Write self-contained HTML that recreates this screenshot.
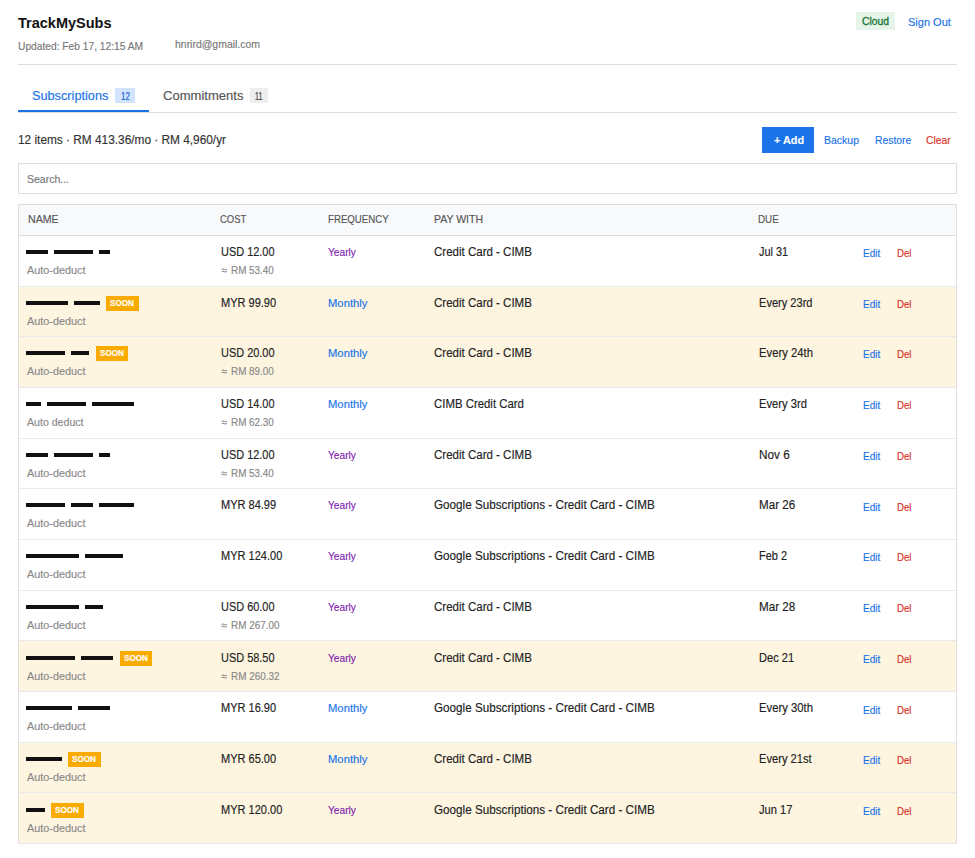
<!DOCTYPE html>
<html><head><meta charset="utf-8"><style>
*{box-sizing:border-box;margin:0;padding:0}
html,body{width:975px;height:858px;overflow:hidden;background:#fff}
body{font-family:"Liberation Sans",sans-serif;position:relative}
.t{position:absolute;white-space:nowrap;line-height:1;transform-origin:0 0;-webkit-text-stroke:0.15px currentColor}
.r{position:absolute}
</style></head><body>
<span class="t" style="left:18.00px;top:15.53px;font-size:14.5px;color:#111;font-weight:bold;-webkit-text-stroke:0;">TrackMySubs</span>
<span class="t" style="left:18.00px;top:40.71px;font-size:10.5px;color:#777;transform:scaleX(0.9734);">Updated: Feb 17, 12:15 AM</span>
<span class="t" style="left:175.00px;top:38.69px;font-size:11px;color:#777;transform:scaleX(0.9508);">hnrird@gmail.com</span>
<div class="r" style="left:856px;top:12px;width:39px;height:18px;background:#e6f4ea;"></div>
<span class="t" style="left:862.00px;top:15.69px;font-size:11px;color:#137333;transform:scaleX(0.9395);-webkit-text-stroke:0.3px #137333;">Cloud</span>
<span class="t" style="left:908.00px;top:16.69px;font-size:11px;color:#1a73e8;">Sign Out</span>
<div class="r" style="left:18px;top:64px;width:939px;height:1px;background:#dddddd;"></div>
<span class="t" style="left:32.00px;top:90.12px;font-size:12.5px;color:#1a73e8;transform:scaleX(1.0169);">Subscriptions</span>
<div class="r" style="left:115px;top:88px;width:20px;height:15px;background:#d2e3fc;"></div>
<span class="t" style="left:120.50px;top:91.73px;font-size:10px;color:#1967d2;transform:scaleX(0.7910);-webkit-text-stroke:0.2px #1967d2;">12</span>
<span class="t" style="left:163.00px;top:90.12px;font-size:12.5px;color:#555;transform:scaleX(1.0429);">Commitments</span>
<div class="r" style="left:250px;top:88px;width:18px;height:15px;background:#eeeeee;"></div>
<span class="t" style="left:255.00px;top:91.73px;font-size:10px;color:#444;transform:scaleX(0.7133);-webkit-text-stroke:0.2px #444;">11</span>
<div class="r" style="left:18px;top:112px;width:939px;height:1px;background:#dddddd;"></div>
<div class="r" style="left:18px;top:110px;width:131px;height:2px;background:#1a73e8;"></div>
<span class="t" style="left:17.70px;top:134.14px;font-size:12px;color:#333;transform:scaleX(0.9870);">12 items · RM 413.36/mo · RM 4,960/yr</span>
<div class="r" style="left:762px;top:127px;width:52px;height:26px;background:#1a73e8;"></div>
<span class="t" style="left:774.00px;top:134.79px;font-size:11px;color:#fff;font-weight:bold;transform:scaleX(0.9855);">+ Add</span>
<span class="t" style="left:824.00px;top:134.79px;font-size:11px;color:#1a73e8;transform:scaleX(0.9541);">Backup</span>
<span class="t" style="left:874.50px;top:134.79px;font-size:11px;color:#1a73e8;transform:scaleX(0.9396);">Restore</span>
<span class="t" style="left:925.80px;top:134.79px;font-size:11px;color:#d93025;transform:scaleX(0.9433);">Clear</span>
<div class="r" style="left:18px;top:163px;width:939px;height:31px;background:#fff;border:1px solid #dddddd"></div>
<span class="t" style="left:27.00px;top:174.27px;font-size:11.5px;color:#757575;transform:scaleX(0.9125);">Search...</span>
<div class="r" style="left:18px;top:204px;width:939px;height:640px;background:#fff;border:1px solid #dddddd"></div>
<div class="r" style="left:19px;top:205px;width:937px;height:30px;background:#f8f9fa;"></div>
<div class="r" style="left:19px;top:235px;width:937px;height:1px;background:#dddddd;"></div>
<span class="t" style="left:27.50px;top:213.69px;font-size:11px;color:#555;transform:scaleX(0.9657);">NAME</span>
<span class="t" style="left:220.40px;top:213.69px;font-size:11px;color:#555;transform:scaleX(0.8575);">COST</span>
<span class="t" style="left:327.80px;top:213.69px;font-size:11px;color:#555;transform:scaleX(0.8790);">FREQUENCY</span>
<span class="t" style="left:434.00px;top:213.69px;font-size:11px;color:#555;transform:scaleX(0.9544);">PAY WITH</span>
<span class="t" style="left:758.30px;top:213.69px;font-size:11px;color:#555;transform:scaleX(0.8908);">DUE</span>
<div class="r" style="left:19px;top:285.67px;width:937px;height:1px;background:#e8eaed;"></div>
<div class="r" style="left:26px;top:250px;width:22px;height:4px;background:#111;"></div>
<div class="r" style="left:54px;top:250px;width:39px;height:4px;background:#111;"></div>
<div class="r" style="left:99px;top:250px;width:11px;height:4px;background:#111;"></div>
<span class="t" style="left:27.20px;top:264.99px;font-size:11px;color:#888;transform:scaleX(0.9845);">Auto-deduct</span>
<span class="t" style="left:220.60px;top:245.64px;font-size:12px;color:#222;transform:scaleX(0.9113);">USD 12.00</span>
<span class="t" style="left:230.80px;top:265.41px;font-size:10.5px;color:#888;transform:scaleX(0.9403);">RM 53.40</span>
<svg class="r" style="left:220.5px;top:268.30px" width="7" height="5" viewBox="0 0 7 5"><path d="M0.6 1.6 Q1.8 0.4 3.2 1.4 T5.9 1.2 M0.6 3.8 Q1.8 2.6 3.2 3.6 T5.9 3.4" fill="none" stroke="#777" stroke-width="0.95"/></svg>
<span class="t" style="left:328.00px;top:246.57px;font-size:11.5px;color:#7e22ad;transform:scaleX(0.8846);">Yearly</span>
<span class="t" style="left:434.20px;top:245.64px;font-size:12px;color:#222;transform:scaleX(0.9595);">Credit Card - CIMB</span>
<span class="t" style="left:758.50px;top:245.64px;font-size:12px;color:#222;transform:scaleX(0.9060);">Jul 31</span>
<span class="t" style="left:862.90px;top:248.29px;font-size:11px;color:#1a73e8;transform:scaleX(0.9130);">Edit</span>
<span class="t" style="left:896.80px;top:248.29px;font-size:11px;color:#d93025;transform:scaleX(0.8788);">Del</span>
<div class="r" style="left:19px;top:286.67px;width:937px;height:49.67px;background:#fdf5e0;"></div>
<div class="r" style="left:19px;top:336.33px;width:937px;height:1px;background:#e8eaed;"></div>
<div class="r" style="left:26px;top:301px;width:42px;height:4px;background:#111;"></div>
<div class="r" style="left:74px;top:301px;width:26px;height:4px;background:#111;"></div>
<div class="r" style="left:106px;top:296px;width:33px;height:15px;background:#f9ab00;"></div>
<span class="t" style="left:109.90px;top:298.60px;font-size:8.5px;color:#fff;font-weight:bold;transform:scaleX(0.9588);">SOON</span>
<span class="t" style="left:27.20px;top:315.99px;font-size:11px;color:#888;transform:scaleX(0.9845);">Auto-deduct</span>
<span class="t" style="left:220.60px;top:296.64px;font-size:12px;color:#222;transform:scaleX(0.9179);">MYR 99.90</span>
<span class="t" style="left:328.00px;top:297.57px;font-size:11.5px;color:#1a73e8;transform:scaleX(0.9782);">Monthly</span>
<span class="t" style="left:434.20px;top:296.64px;font-size:12px;color:#222;transform:scaleX(0.9595);">Credit Card - CIMB</span>
<span class="t" style="left:758.50px;top:296.64px;font-size:12px;color:#222;transform:scaleX(0.9221);">Every 23rd</span>
<span class="t" style="left:862.90px;top:299.29px;font-size:11px;color:#1a73e8;transform:scaleX(0.9130);">Edit</span>
<span class="t" style="left:896.80px;top:299.29px;font-size:11px;color:#d93025;transform:scaleX(0.8788);">Del</span>
<div class="r" style="left:19px;top:337.33px;width:937px;height:49.67px;background:#fdf5e0;"></div>
<div class="r" style="left:19px;top:387.00px;width:937px;height:1px;background:#e8eaed;"></div>
<div class="r" style="left:26px;top:351px;width:39px;height:4px;background:#111;"></div>
<div class="r" style="left:71px;top:351px;width:18px;height:4px;background:#111;"></div>
<div class="r" style="left:96px;top:346px;width:32px;height:15px;background:#f9ab00;"></div>
<span class="t" style="left:99.90px;top:348.60px;font-size:8.5px;color:#fff;font-weight:bold;transform:scaleX(0.9588);">SOON</span>
<span class="t" style="left:27.20px;top:365.99px;font-size:11px;color:#888;transform:scaleX(0.9845);">Auto-deduct</span>
<span class="t" style="left:220.60px;top:346.64px;font-size:12px;color:#222;transform:scaleX(0.9113);">USD 20.00</span>
<span class="t" style="left:230.80px;top:366.41px;font-size:10.5px;color:#888;transform:scaleX(0.9403);">RM 89.00</span>
<svg class="r" style="left:220.5px;top:369.30px" width="7" height="5" viewBox="0 0 7 5"><path d="M0.6 1.6 Q1.8 0.4 3.2 1.4 T5.9 1.2 M0.6 3.8 Q1.8 2.6 3.2 3.6 T5.9 3.4" fill="none" stroke="#777" stroke-width="0.95"/></svg>
<span class="t" style="left:328.00px;top:347.57px;font-size:11.5px;color:#1a73e8;transform:scaleX(0.9782);">Monthly</span>
<span class="t" style="left:434.20px;top:346.64px;font-size:12px;color:#222;transform:scaleX(0.9595);">Credit Card - CIMB</span>
<span class="t" style="left:758.50px;top:346.64px;font-size:12px;color:#222;transform:scaleX(0.9414);">Every 24th</span>
<span class="t" style="left:862.90px;top:349.29px;font-size:11px;color:#1a73e8;transform:scaleX(0.9130);">Edit</span>
<span class="t" style="left:896.80px;top:349.29px;font-size:11px;color:#d93025;transform:scaleX(0.8788);">Del</span>
<div class="r" style="left:19px;top:437.67px;width:937px;height:1px;background:#e8eaed;"></div>
<div class="r" style="left:26px;top:402px;width:15px;height:4px;background:#111;"></div>
<div class="r" style="left:47px;top:402px;width:39px;height:4px;background:#111;"></div>
<div class="r" style="left:92px;top:402px;width:42px;height:4px;background:#111;"></div>
<span class="t" style="left:27.20px;top:416.99px;font-size:11px;color:#888;transform:scaleX(0.9623);">Auto deduct</span>
<span class="t" style="left:220.60px;top:397.64px;font-size:12px;color:#222;transform:scaleX(0.9113);">USD 14.00</span>
<span class="t" style="left:230.80px;top:417.41px;font-size:10.5px;color:#888;transform:scaleX(0.9403);">RM 62.30</span>
<svg class="r" style="left:220.5px;top:420.30px" width="7" height="5" viewBox="0 0 7 5"><path d="M0.6 1.6 Q1.8 0.4 3.2 1.4 T5.9 1.2 M0.6 3.8 Q1.8 2.6 3.2 3.6 T5.9 3.4" fill="none" stroke="#777" stroke-width="0.95"/></svg>
<span class="t" style="left:328.00px;top:398.57px;font-size:11.5px;color:#1a73e8;transform:scaleX(0.9782);">Monthly</span>
<span class="t" style="left:434.20px;top:397.64px;font-size:12px;color:#222;transform:scaleX(0.9495);">CIMB Credit Card</span>
<span class="t" style="left:758.50px;top:397.64px;font-size:12px;color:#222;transform:scaleX(0.9346);">Every 3rd</span>
<span class="t" style="left:862.90px;top:400.29px;font-size:11px;color:#1a73e8;transform:scaleX(0.9130);">Edit</span>
<span class="t" style="left:896.80px;top:400.29px;font-size:11px;color:#d93025;transform:scaleX(0.8788);">Del</span>
<div class="r" style="left:19px;top:488.33px;width:937px;height:1px;background:#e8eaed;"></div>
<div class="r" style="left:26px;top:453px;width:22px;height:4px;background:#111;"></div>
<div class="r" style="left:54px;top:453px;width:39px;height:4px;background:#111;"></div>
<div class="r" style="left:99px;top:453px;width:11px;height:4px;background:#111;"></div>
<span class="t" style="left:27.20px;top:467.99px;font-size:11px;color:#888;transform:scaleX(0.9845);">Auto-deduct</span>
<span class="t" style="left:220.60px;top:448.64px;font-size:12px;color:#222;transform:scaleX(0.9113);">USD 12.00</span>
<span class="t" style="left:230.80px;top:468.41px;font-size:10.5px;color:#888;transform:scaleX(0.9403);">RM 53.40</span>
<svg class="r" style="left:220.5px;top:471.30px" width="7" height="5" viewBox="0 0 7 5"><path d="M0.6 1.6 Q1.8 0.4 3.2 1.4 T5.9 1.2 M0.6 3.8 Q1.8 2.6 3.2 3.6 T5.9 3.4" fill="none" stroke="#777" stroke-width="0.95"/></svg>
<span class="t" style="left:328.00px;top:449.57px;font-size:11.5px;color:#7e22ad;transform:scaleX(0.8846);">Yearly</span>
<span class="t" style="left:434.20px;top:448.64px;font-size:12px;color:#222;transform:scaleX(0.9595);">Credit Card - CIMB</span>
<span class="t" style="left:758.50px;top:448.64px;font-size:12px;color:#222;transform:scaleX(0.9793);">Nov 6</span>
<span class="t" style="left:862.90px;top:451.29px;font-size:11px;color:#1a73e8;transform:scaleX(0.9130);">Edit</span>
<span class="t" style="left:896.80px;top:451.29px;font-size:11px;color:#d93025;transform:scaleX(0.8788);">Del</span>
<div class="r" style="left:19px;top:539.00px;width:937px;height:1px;background:#e8eaed;"></div>
<div class="r" style="left:26px;top:503px;width:39px;height:4px;background:#111;"></div>
<div class="r" style="left:71px;top:503px;width:22px;height:4px;background:#111;"></div>
<div class="r" style="left:99px;top:503px;width:35px;height:4px;background:#111;"></div>
<span class="t" style="left:27.20px;top:517.99px;font-size:11px;color:#888;transform:scaleX(0.9845);">Auto-deduct</span>
<span class="t" style="left:220.60px;top:498.64px;font-size:12px;color:#222;transform:scaleX(0.9179);">MYR 84.99</span>
<span class="t" style="left:328.00px;top:499.57px;font-size:11.5px;color:#7e22ad;transform:scaleX(0.8846);">Yearly</span>
<span class="t" style="left:434.20px;top:498.64px;font-size:12px;color:#222;transform:scaleX(0.9738);">Google Subscriptions - Credit Card - CIMB</span>
<span class="t" style="left:758.50px;top:498.64px;font-size:12px;color:#222;transform:scaleX(0.9692);">Mar 26</span>
<span class="t" style="left:862.90px;top:502.29px;font-size:11px;color:#1a73e8;transform:scaleX(0.9130);">Edit</span>
<span class="t" style="left:896.80px;top:502.29px;font-size:11px;color:#d93025;transform:scaleX(0.8788);">Del</span>
<div class="r" style="left:19px;top:589.67px;width:937px;height:1px;background:#e8eaed;"></div>
<div class="r" style="left:26px;top:554px;width:53px;height:4px;background:#111;"></div>
<div class="r" style="left:85px;top:554px;width:38px;height:4px;background:#111;"></div>
<span class="t" style="left:27.20px;top:568.99px;font-size:11px;color:#888;transform:scaleX(0.9845);">Auto-deduct</span>
<span class="t" style="left:220.60px;top:549.64px;font-size:12px;color:#222;transform:scaleX(0.9188);">MYR 124.00</span>
<span class="t" style="left:328.00px;top:550.57px;font-size:11.5px;color:#7e22ad;transform:scaleX(0.8846);">Yearly</span>
<span class="t" style="left:434.20px;top:549.64px;font-size:12px;color:#222;transform:scaleX(0.9738);">Google Subscriptions - Credit Card - CIMB</span>
<span class="t" style="left:758.50px;top:549.64px;font-size:12px;color:#222;transform:scaleX(0.9123);">Feb 2</span>
<span class="t" style="left:862.90px;top:552.29px;font-size:11px;color:#1a73e8;transform:scaleX(0.9130);">Edit</span>
<span class="t" style="left:896.80px;top:552.29px;font-size:11px;color:#d93025;transform:scaleX(0.8788);">Del</span>
<div class="r" style="left:19px;top:640.33px;width:937px;height:1px;background:#e8eaed;"></div>
<div class="r" style="left:26px;top:605px;width:53px;height:4px;background:#111;"></div>
<div class="r" style="left:85px;top:605px;width:18px;height:4px;background:#111;"></div>
<span class="t" style="left:27.20px;top:619.99px;font-size:11px;color:#888;transform:scaleX(0.9845);">Auto-deduct</span>
<span class="t" style="left:220.60px;top:600.64px;font-size:12px;color:#222;transform:scaleX(0.9113);">USD 60.00</span>
<span class="t" style="left:230.80px;top:620.41px;font-size:10.5px;color:#888;transform:scaleX(0.9422);">RM 267.00</span>
<svg class="r" style="left:220.5px;top:623.30px" width="7" height="5" viewBox="0 0 7 5"><path d="M0.6 1.6 Q1.8 0.4 3.2 1.4 T5.9 1.2 M0.6 3.8 Q1.8 2.6 3.2 3.6 T5.9 3.4" fill="none" stroke="#777" stroke-width="0.95"/></svg>
<span class="t" style="left:328.00px;top:601.57px;font-size:11.5px;color:#7e22ad;transform:scaleX(0.8846);">Yearly</span>
<span class="t" style="left:434.20px;top:600.64px;font-size:12px;color:#222;transform:scaleX(0.9595);">Credit Card - CIMB</span>
<span class="t" style="left:758.50px;top:600.64px;font-size:12px;color:#222;transform:scaleX(0.9692);">Mar 28</span>
<span class="t" style="left:862.90px;top:603.29px;font-size:11px;color:#1a73e8;transform:scaleX(0.9130);">Edit</span>
<span class="t" style="left:896.80px;top:603.29px;font-size:11px;color:#d93025;transform:scaleX(0.8788);">Del</span>
<div class="r" style="left:19px;top:641.33px;width:937px;height:49.67px;background:#fdf5e0;"></div>
<div class="r" style="left:19px;top:691.00px;width:937px;height:1px;background:#e8eaed;"></div>
<div class="r" style="left:26px;top:656px;width:49px;height:4px;background:#111;"></div>
<div class="r" style="left:81px;top:656px;width:32px;height:4px;background:#111;"></div>
<div class="r" style="left:120px;top:651px;width:32px;height:15px;background:#f9ab00;"></div>
<span class="t" style="left:123.90px;top:653.60px;font-size:8.5px;color:#fff;font-weight:bold;transform:scaleX(0.9588);">SOON</span>
<span class="t" style="left:27.20px;top:670.99px;font-size:11px;color:#888;transform:scaleX(0.9845);">Auto-deduct</span>
<span class="t" style="left:220.60px;top:651.64px;font-size:12px;color:#222;transform:scaleX(0.9113);">USD 58.50</span>
<span class="t" style="left:230.80px;top:671.41px;font-size:10.5px;color:#888;transform:scaleX(0.9422);">RM 260.32</span>
<svg class="r" style="left:220.5px;top:674.30px" width="7" height="5" viewBox="0 0 7 5"><path d="M0.6 1.6 Q1.8 0.4 3.2 1.4 T5.9 1.2 M0.6 3.8 Q1.8 2.6 3.2 3.6 T5.9 3.4" fill="none" stroke="#777" stroke-width="0.95"/></svg>
<span class="t" style="left:328.00px;top:652.57px;font-size:11.5px;color:#7e22ad;transform:scaleX(0.8846);">Yearly</span>
<span class="t" style="left:434.20px;top:651.64px;font-size:12px;color:#222;transform:scaleX(0.9595);">Credit Card - CIMB</span>
<span class="t" style="left:758.50px;top:651.64px;font-size:12px;color:#222;transform:scaleX(0.9234);">Dec 21</span>
<span class="t" style="left:862.90px;top:654.29px;font-size:11px;color:#1a73e8;transform:scaleX(0.9130);">Edit</span>
<span class="t" style="left:896.80px;top:654.29px;font-size:11px;color:#d93025;transform:scaleX(0.8788);">Del</span>
<div class="r" style="left:19px;top:741.67px;width:937px;height:1px;background:#e8eaed;"></div>
<div class="r" style="left:26px;top:706px;width:46px;height:4px;background:#111;"></div>
<div class="r" style="left:78px;top:706px;width:32px;height:4px;background:#111;"></div>
<span class="t" style="left:27.20px;top:720.99px;font-size:11px;color:#888;transform:scaleX(0.9845);">Auto-deduct</span>
<span class="t" style="left:220.60px;top:701.64px;font-size:12px;color:#222;transform:scaleX(0.9179);">MYR 16.90</span>
<span class="t" style="left:328.00px;top:702.57px;font-size:11.5px;color:#1a73e8;transform:scaleX(0.9782);">Monthly</span>
<span class="t" style="left:434.20px;top:701.64px;font-size:12px;color:#222;transform:scaleX(0.9738);">Google Subscriptions - Credit Card - CIMB</span>
<span class="t" style="left:758.50px;top:701.64px;font-size:12px;color:#222;transform:scaleX(0.9414);">Every 30th</span>
<span class="t" style="left:862.90px;top:705.29px;font-size:11px;color:#1a73e8;transform:scaleX(0.9130);">Edit</span>
<span class="t" style="left:896.80px;top:705.29px;font-size:11px;color:#d93025;transform:scaleX(0.8788);">Del</span>
<div class="r" style="left:19px;top:742.67px;width:937px;height:49.67px;background:#fdf5e0;"></div>
<div class="r" style="left:19px;top:792.33px;width:937px;height:1px;background:#e8eaed;"></div>
<div class="r" style="left:26px;top:757px;width:36px;height:4px;background:#111;"></div>
<div class="r" style="left:68px;top:752px;width:33px;height:15px;background:#f9ab00;"></div>
<span class="t" style="left:71.90px;top:754.60px;font-size:8.5px;color:#fff;font-weight:bold;transform:scaleX(0.9588);">SOON</span>
<span class="t" style="left:27.20px;top:771.99px;font-size:11px;color:#888;transform:scaleX(0.9845);">Auto-deduct</span>
<span class="t" style="left:220.60px;top:752.64px;font-size:12px;color:#222;transform:scaleX(0.9179);">MYR 65.00</span>
<span class="t" style="left:328.00px;top:753.57px;font-size:11.5px;color:#1a73e8;transform:scaleX(0.9782);">Monthly</span>
<span class="t" style="left:434.20px;top:752.64px;font-size:12px;color:#222;transform:scaleX(0.9595);">Credit Card - CIMB</span>
<span class="t" style="left:758.50px;top:752.64px;font-size:12px;color:#222;transform:scaleX(0.9295);">Every 21st</span>
<span class="t" style="left:862.90px;top:755.29px;font-size:11px;color:#1a73e8;transform:scaleX(0.9130);">Edit</span>
<span class="t" style="left:896.80px;top:755.29px;font-size:11px;color:#d93025;transform:scaleX(0.8788);">Del</span>
<div class="r" style="left:19px;top:793.33px;width:937px;height:49.67px;background:#fdf5e0;"></div>
<div class="r" style="left:19px;top:843.00px;width:937px;height:1px;background:#e8eaed;"></div>
<div class="r" style="left:26px;top:808px;width:19px;height:4px;background:#111;"></div>
<div class="r" style="left:51px;top:803px;width:33px;height:15px;background:#f9ab00;"></div>
<span class="t" style="left:54.90px;top:805.60px;font-size:8.5px;color:#fff;font-weight:bold;transform:scaleX(0.9588);">SOON</span>
<span class="t" style="left:27.20px;top:822.99px;font-size:11px;color:#888;transform:scaleX(0.9845);">Auto-deduct</span>
<span class="t" style="left:220.60px;top:803.64px;font-size:12px;color:#222;transform:scaleX(0.9188);">MYR 120.00</span>
<span class="t" style="left:328.00px;top:804.57px;font-size:11.5px;color:#7e22ad;transform:scaleX(0.8846);">Yearly</span>
<span class="t" style="left:434.20px;top:803.64px;font-size:12px;color:#222;transform:scaleX(0.9738);">Google Subscriptions - Credit Card - CIMB</span>
<span class="t" style="left:758.50px;top:803.64px;font-size:12px;color:#222;transform:scaleX(0.9270);">Jun 17</span>
<span class="t" style="left:862.90px;top:806.29px;font-size:11px;color:#1a73e8;transform:scaleX(0.9130);">Edit</span>
<span class="t" style="left:896.80px;top:806.29px;font-size:11px;color:#d93025;transform:scaleX(0.8788);">Del</span>
</body></html>
